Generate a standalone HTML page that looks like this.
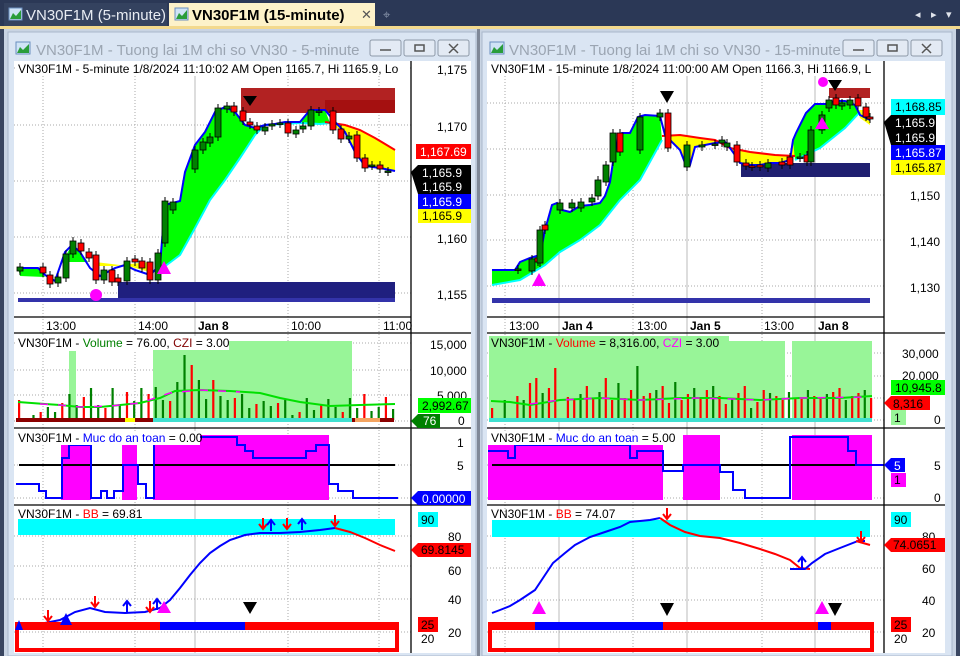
<!DOCTYPE html>
<html><head><meta charset="utf-8"><style>
body{margin:0;width:960px;height:656px;overflow:hidden;background:#2b3856;font-family:"Liberation Sans",sans-serif}
svg{display:block}
text{font-family:"Liberation Sans",sans-serif}
</style></head><body>
<svg id="s" width="960" height="656" viewBox="0 0 960 656" xmlns="http://www.w3.org/2000/svg">
<rect width="960" height="656" fill="#2b3856"/>
<rect x="4" y="3" width="163" height="23" fill="#34425f"/>
<rect x="9" y="8" width="13" height="12" fill="#cfe3f6" stroke="#6a8fbf"/><path d="M10 19 L13 13 L16 16 L21 10 L21 19Z" fill="#2a9d3a"/>
<text x="26" y="20" font-size="15" fill="#e8ecf3">VN30F1M (5-minute)</text>
<rect x="169" y="3" width="206" height="24" fill="#fdf2c9"/>
<rect x="175" y="8" width="13" height="12" fill="#cfe3f6" stroke="#6a8fbf"/><path d="M176 19 L179 13 L182 16 L187 10 L187 19Z" fill="#2a9d3a"/>
<text x="192" y="20" font-size="15" font-weight="bold" fill="#000">VN30F1M (15-minute)</text>
<text x="361" y="19" font-size="13" fill="#555">✕</text>
<text x="383" y="19" font-size="13" fill="#8894aa">⌖</text>
<text x="915" y="18" font-size="11" fill="#e0e4ec">◂</text><text x="931" y="18" font-size="11" fill="#e0e4ec">▸</text><text x="946" y="18" font-size="11" fill="#e0e4ec">▾</text>
<rect x="0" y="26" width="960" height="3" fill="#f3d98d"/>
<rect x="0" y="29" width="960" height="627" fill="#c9d4e3"/>
<rect x="0" y="29" width="4" height="627" fill="#3a4660"/>
<rect x="956" y="29" width="4" height="627" fill="#3a4660"/>
<rect x="8" y="32" width="468" height="624" fill="#dae5f3" stroke="#a9b7cb"/>
<rect x="482" y="32" width="470" height="624" fill="#dae5f3" stroke="#a9b7cb"/>
<rect x="477" y="29" width="3" height="627" fill="#7f8898"/>
<rect x="16" y="42" width="14" height="12" fill="#cfe3f6" stroke="#6a8fbf"/><path d="M17 53 L20 47 L23 50 L29 44 L29 53Z" fill="#2a9d3a"/>
<text x="36" y="55" font-size="15" fill="#9ba5b2">VN30F1M - Tuong lai 1M chi so VN30 - 5-minute</text>
<rect x="490" y="42" width="14" height="12" fill="#cfe3f6" stroke="#6a8fbf"/><path d="M491 53 L494 47 L497 50 L503 44 L503 53Z" fill="#2a9d3a"/>
<text x="509" y="55" font-size="15" fill="#9ba5b2">VN30F1M - Tuong lai 1M chi so VN30 - 15-minute</text>
<g fill="#e3eaf4" stroke="#8e99a8"><rect x="370" y="40" width="31" height="16" rx="2"/><rect x="404" y="40" width="31" height="16" rx="2"/><rect x="438" y="40" width="31" height="16" rx="2"/>
<rect x="843" y="40" width="31" height="16" rx="2"/><rect x="877" y="40" width="31" height="16" rx="2"/><rect x="911" y="40" width="31" height="16" rx="2"/></g>
<g stroke="#555" fill="none" stroke-width="1.5"><path d="M380 50h11M415 45h9v6h-9zM449 44l9 9M458 44l-9 9M853 50h11M888 45h9v6h-9zM922 44l9 9M931 44l-9 9"/></g>
<rect x="14" y="61" width="457" height="592" fill="#fff"/>
<rect x="487" y="61" width="458" height="592" fill="#fff"/>
<g id="dyn"></g>
<g stroke="#000" stroke-width="1.3">
<path d="M411 61V653M14 317H411M14 333H471M14 428H471M14 505H471"/>
<path d="M884 61V653M487 317H884M487 333H945M487 428H945M487 505H945"/>
</g>
<g font-size="12" fill="#000">
<rect x="16" y="61" width="392" height="15" fill="#fff"/>
<text x="18" y="73">VN30F1M - 5-minute 1/8/2024 11:10:02 AM Open 1165.7, Hi 1165.9, Lo</text>
<text x="437" y="74">1,175</text><text x="437" y="131">1,170</text><text x="437" y="243">1,160</text><text x="437" y="299">1,155</text>
<text x="46" y="330">13:00</text><text x="138" y="330">14:00</text><text x="198" y="330" font-weight="bold">Jan 8</text><text x="291" y="330">10:00</text><text x="383" y="330">11:00</text>
<text x="430" y="349">15,000</text><text x="430" y="375">10,000</text><text x="437" y="400">5,000</text><text x="458" y="425">0</text>
<text x="457" y="447">1</text><text x="457" y="470">5</text>
<text x="448" y="575">60</text><text x="448" y="604">40</text><text x="448" y="637">20</text><text x="448" y="541">80</text>
</g>
<g font-size="12">
<rect x="416" y="144" width="55" height="15" fill="#ff0000"/><text x="420" y="156" fill="#fff">1,167.69</text>
<path d="M411 172 L418 165 H471 V194 H418Z" fill="#000"/><text x="422" y="177" fill="#fff">1,165.9</text><text x="422" y="191" fill="#fff">1,165.9</text>
<rect x="418" y="194" width="53" height="15" fill="#0000ff"/><text x="422" y="206" fill="#fff">1,165.9</text>
<rect x="418" y="209" width="53" height="14" fill="#ffff00"/><text x="422" y="220" fill="#000">1,165.9</text>
<rect x="418" y="398" width="53" height="15" fill="#00ff00"/><text x="422" y="410" fill="#000">2,992.67</text>
<path d="M411 421 L418 414 H440 V428 H418Z" fill="#008000"/><text x="423" y="425" fill="#fff">76</text>
<path d="M411 498 L418 491 H471 V505 H418Z" fill="#0000ff"/><text x="422" y="503" fill="#fff">0.00000</text>
<rect x="418" y="512" width="20" height="15" fill="#00ffff"/><text x="421" y="524">90</text>
<path d="M411 550 L418 543 H471 V557 H418Z" fill="#ff0000"/><text x="421" y="554" fill="#000">69.8145</text>
<rect x="418" y="617" width="20" height="15" fill="#ff0000"/><text x="421" y="629">25</text>
<text x="421" y="643">20</text>
</g>
<g font-size="12">
<rect x="16" y="336" width="213" height="14" fill="#fff"/>
<text x="18" y="347"><tspan>VN30F1M - </tspan><tspan fill="#008000">Volume</tspan><tspan> = 76.00, </tspan><tspan fill="#800000">CZI</tspan><tspan> = 3.00</tspan></text>
<rect x="16" y="431" width="184" height="14" fill="#fff"/>
<text x="18" y="442"><tspan>VN30F1M - </tspan><tspan fill="#0000ff">Muc do an toan</tspan><tspan> = 0.00</tspan></text>
<text x="18" y="518"><tspan>VN30F1M - </tspan><tspan fill="#ff0000">BB</tspan><tspan> = 69.81</tspan></text>
</g>
<g font-size="12" fill="#000">
<rect x="489" y="61" width="392" height="15" fill="#fff"/>
<text x="491" y="73">VN30F1M - 15-minute 1/8/2024 11:00:00 AM Open 1166.3, Hi 1166.9, L</text>
<text x="910" y="200">1,150</text><text x="910" y="246">1,140</text><text x="910" y="292">1,130</text>
<text x="509" y="330">13:00</text><text x="562" y="330" font-weight="bold">Jan 4</text><text x="637" y="330">13:00</text><text x="690" y="330" font-weight="bold">Jan 5</text><text x="764" y="330">13:00</text><text x="818" y="330" font-weight="bold">Jan 8</text>
<text x="902" y="358">30,000</text><text x="902" y="380">20,000</text><text x="934" y="424">0</text>
<text x="934" y="470">5</text><text x="934" y="502">0</text>
<text x="922" y="541">80</text><text x="922" y="573">60</text><text x="922" y="605">40</text><text x="922" y="637">20</text>
</g>
<g font-size="12">
<rect x="891" y="99" width="54" height="16" fill="#00ffff"/><text x="895" y="111">1,168.85</text>
<path d="M884 122 L891 115 H936 V145 H891Z" fill="#000"/><text x="895" y="127" fill="#fff">1,165.9</text><text x="895" y="142" fill="#fff">1,165.9</text>
<rect x="891" y="145" width="54" height="15" fill="#0000ff"/><text x="895" y="157" fill="#fff">1,165.87</text>
<rect x="891" y="160" width="54" height="15" fill="#ffff00"/><text x="895" y="172">1,165.87</text>
<rect x="891" y="380" width="54" height="15" fill="#00ff00"/><text x="895" y="392">10,945.8</text>
<path d="M884 403 L891 396 H930 V410 H891Z" fill="#ff0000"/><text x="893" y="408">8,316</text>
<rect x="891" y="410" width="15" height="15" fill="#98f598"/><text x="894" y="422">1</text>
<path d="M884 465 L891 458 H905 V472 H891Z" fill="#0000ff"/><text x="894" y="470" fill="#fff">5</text>
<rect x="891" y="473" width="15" height="14" fill="#ff00ff"/><text x="894" y="484">1</text>
<rect x="891" y="512" width="20" height="15" fill="#00ffff"/><text x="894" y="524">90</text>
<path d="M884 545 L891 538 H945 V552 H891Z" fill="#ff0000"/><text x="893" y="549">74.0651</text>
<rect x="891" y="617" width="20" height="15" fill="#ff0000"/><text x="894" y="629">25</text>
<text x="894" y="643">20</text>
<rect x="489" y="336" width="240" height="14" fill="#98f598"/>
<text x="491" y="347"><tspan>VN30F1M - </tspan><tspan fill="#ff0000">Volume</tspan><tspan> = 8,316.00, </tspan><tspan fill="#ff00ff">CZI</tspan><tspan> = 3.00</tspan></text>
<rect x="489" y="431" width="186" height="14" fill="#fff"/>
<text x="491" y="442"><tspan>VN30F1M - </tspan><tspan fill="#0000ff">Muc do an toan</tspan><tspan> = 5.00</tspan></text>
<text x="491" y="518"><tspan>VN30F1M - </tspan><tspan fill="#ff0000">BB</tspan><tspan> = 74.07</tspan></text>
</g>
</svg>
<script>
const NS="http://www.w3.org/2000/svg",G=document.getElementById("dyn");
function el(t,a){const e=document.createElementNS(NS,t);for(const k in a)e.setAttribute(k,a[k]);G.appendChild(e);return e}
function pts(a){return a.map(p=>p.join(",")).join(" ")}
function hg(x1,x2,ys){ys.forEach(y=>el("line",{x1,x2,y1:y,y2:y,stroke:"#aaa","stroke-dasharray":"1,2"}))}
function vg(xs,y1,y2,solid){xs.forEach((x,i)=>el("line",{x1:x,x2:x,y1,y2,stroke:solid.includes(i)?"#bbb":"#aaa","stroke-dasharray":solid.includes(i)?"":"1,2"}))}
vg([43,135,195,288,379],61,653,[2]);hg(14,411,[68,125,181,237,293,343,370,395,421,465,498,536,566,599,632]);
vg([505,559,633,687,762,815],61,653,[1,3,5]);hg(487,884,[103,149,195,240,286,353,376,398,420,465,498,536,568,600,632]);
el("rect",{x:241,y:88,width:154,height:25,fill:"#b22222"});el("rect",{x:325,y:100,width:70,height:13,fill:"#a51010"});
el("rect",{x:118,y:282,width:277,height:18,fill:"#1f1f7f"});el("rect",{x:18,y:298,width:377,height:4,fill:"#3333aa"});
const LB=[[18,268],[38,268],[45,275],[55,281],[65,252],[72,245],[80,252],[90,268],[100,276],[115,268],[125,265],[135,270],[150,275],[160,265],[165,205],[180,201],[185,172],[195,145],[205,132],[215,112],[225,107],[235,112],[245,125],[255,128],[265,125],[275,124],[285,122],[300,122],[310,110],[325,110],[335,122],[345,132],[355,152],[365,166],[380,168],[395,171]];
const LC=[[160,270],[180,255],[195,228],[210,200],[225,180],[240,158],[255,135],[265,125],[300,123],[320,124],[330,123]];
el("polygon",{points:pts(LB.filter(p=>p[0]>=160&&p[0]<=330).concat(LC.slice().reverse())),fill:"#00ff00"});
const LR=[[325,122],[345,125],[360,130],[375,138],[395,150]];
el("polygon",{points:pts([[325,122],[345,132],[355,152],[365,166],[380,168],[395,171]].concat(LR.slice().reverse())),fill:"#ffff00"});
el("polygon",{points:"18,268 38,268 45,277 20,276",fill:"#00ff00"});el("polygon",{points:"62,262 72,245 80,252 88,262",fill:"#00ff00"});
el("polygon",{points:"95,266 115,266 125,265 135,268 150,272 150,262 120,265 95,262",fill:"#ffff00"});
el("polyline",{points:pts(LC),fill:"none",stroke:"#00ffff","stroke-width":2});
el("polyline",{points:pts(LR),fill:"none",stroke:"#ff0000","stroke-width":2});
el("polyline",{points:pts(LB),fill:"none",stroke:"#0000ff","stroke-width":2});
function cd(x,a,b,c){const h=Math.min(a,b),l=Math.max(a,b);el("line",{x1:x,x2:x,y1:h-4,y2:l+4,stroke:"#000"});el("rect",{x:x-3,y:h,width:6,height:Math.max(l-h,1.5),fill:c,stroke:"#000","stroke-width":.8})}
[[20,267,271,"g"],[43,267,273,"r"],[50,275,284,"r"],[58,277,283,"g"],[66,254,278,"g"],[73,241,254,"g"],[81,243,251,"r"],[89,252,258,"r"],[96,255,280,"r"],[104,270,280,"g"],[112,270,282,"r"],[118,278,282,"r"],[127,261,281,"g"],[135,259,262,"r"],[142,261,268,"r"],[150,262,280,"r"],[158,253,280,"g"],[165,201,243,"g"],[173,202,210,"g"],[195,150,169,"g"],[203,142,150,"g"],[210,137,143,"g"],[218,108,137,"g"],[227,106,109,"g"],[234,106,112,"r"],[243,111,121,"r"],[250,122,125,"r"],[257,126,130,"r"],[265,127,131,"g"],[272,124,126,"g"],[280,123,124,"g"],[288,123,133,"r"],[296,130,134,"g"],[303,126,129,"g"],[311,110,126,"g"],[319,111,112,"g"],[333,111,130,"r"],[341,129,139,"r"],[349,136,139,"g"],[357,135,158,"r"],[365,158,168,"r"],[372,165,166,"g"],[380,165,169,"r"],[388,171,172,"g"]].forEach(c=>cd(c[0],c[1],c[2],c[3]=="g"?"#008000":"#ff0000"));
el("polygon",{points:"243,96 257,96 250,106",fill:"#000"});el("polygon",{points:"157,274 171,274 164,261",fill:"#ff00ff"});el("circle",{cx:96,cy:295,r:6,fill:"#ff00ff"});
el("rect",{x:829,y:88,width:41,height:10,fill:"#b22222"});el("rect",{x:741,y:163,width:129,height:14,fill:"#1f1f70"});
el("rect",{x:492,y:298,width:378,height:5,fill:"#3333aa"});
const RB=[[492,270],[515,270],[520,262],[530,258],[540,255],[545,230],[552,205],[557,203],[562,210],[570,212],[580,206],[590,205],[600,203],[605,196],[610,182],[613,162],[618,138],[622,133],[630,133],[638,117],[645,115],[660,116],[665,135],[670,140],[680,150],[685,163],[690,165],[695,147],[705,145],[715,143],[725,142],[730,148],[735,155],[740,163],[750,165],[760,165],[770,163],[780,163],[790,160],[793,140],[796,133],[806,113],[815,104],[825,104],[835,101],[845,101],[855,105],[860,115],[870,120]];
const RC=[[492,285],[520,280],[545,265],[560,252],[580,240],[600,225],[620,200],[640,180],[662,140]];
el("polygon",{points:pts(RB.filter(p=>p[0]<=662).concat(RC.slice().reverse())),fill:"#00ff00"});
const RR=[[662,136],[680,135],[700,138],[715,140],[730,148],[750,152],[775,155],[795,156]];
el("polygon",{points:pts(RB.filter(p=>p[0]>=665&&p[0]<=795).concat(RR.slice().reverse())),fill:"#ffff00"});
const RC2=[[795,160],[820,148],[845,128],[860,112]];
el("polygon",{points:pts(RB.filter(p=>p[0]>=793&&p[0]<=860).concat(RC2.slice().reverse())),fill:"#00ff00"});
el("polygon",{points:"858,110 870,110 870,125 860,118",fill:"#ffff00"});
[RC,RC2].forEach(a=>el("polyline",{points:pts(a),fill:"none",stroke:"#00ffff","stroke-width":2}));
el("polyline",{points:pts(RR),fill:"none",stroke:"#ff0000","stroke-width":2});
el("polyline",{points:pts(RB),fill:"none",stroke:"#0000ff","stroke-width":2});
[[518,269,270,"g"],[532,259,271,"g"],[538,258,262,"r"],[540,230,263,"g"],[545,225,230,"r"],[560,203,210,"g"],[572,203,208,"g"],[581,202,208,"g"],[592,198,202,"g"],[598,180,196,"g"],[606,165,182,"g"],[613,133,162,"g"],[620,133,152,"r"],[640,117,150,"g"],[660,113,117,"g"],[668,113,148,"r"],[687,145,167,"g"],[702,145,147,"g"],[715,144,145,"g"],[722,140,143,"g"],[727,143,147,"g"],[737,145,162,"r"],[746,163,166,"r"],[752,166,167,"r"],[760,165,167,"r"],[768,163,168,"g"],[782,162,165,"r"],[790,157,165,"r"],[800,157,158,"g"],[807,155,162,"r"],[811,130,162,"g"],[822,115,130,"g"],[829,100,108,"g"],[836,98,105,"r"],[842,103,106,"g"],[850,100,105,"g"],[858,98,106,"r"],[866,107,117,"r"],[870,117,119,"r"]].forEach(c=>cd(c[0],c[1],c[2],c[3]=="g"?"#008000":"#ff0000"));
el("polygon",{points:"660,91 674,91 667,103",fill:"#000"});el("polygon",{points:"828,80 842,80 835,91",fill:"#000"});
el("polygon",{points:"532,286 546,286 539,273",fill:"#ff00ff"});el("polygon",{points:"815,129 829,129 822,117",fill:"#ff00ff"});el("circle",{cx:823,cy:82,r:5,fill:"#ff00ff"});
el("rect",{x:69,y:351,width:7,height:70,fill:"#98f598"});el("rect",{x:153,y:341,width:199,height:80,fill:"#98f598"});
function vol(x0,x1,y0,ys,cols){const n=ys.length,dx=(x1-x0)/(n-1);ys.forEach((h,i)=>el("rect",{x:x0+i*dx,y:y0-h,width:2.2,height:h,fill:cols[i]}))}
const lv=[20,0,5,8,13,8,17,26,15,23,32,15,12,32,16,28,19,32,26,33,20,19,38,65,55,40,21,40,24,20,22,26,12,16,19,14,17,20,5,8,22,10,15,21,13,8,22,12,26,9,13,23,11];
vol(18,392,420,lv,lv.map((v,i)=>(i*7%3==0)?"#ff0000":"#008000"));
el("rect",{x:16,y:418,width:378,height:4,fill:"#8b0000"});el("rect",{x:153,y:418,width:199,height:4,fill:"#40e0d0"});
el("rect",{x:355,y:418,width:25,height:4,fill:"#f4a460"});el("rect",{x:125,y:418,width:10,height:4,fill:"#ffff00"});
el("polyline",{points:"18,402 45,404 60,405 80,407 100,407 120,405 140,403 160,398 175,391 200,390 230,391 260,393 280,398 300,402 330,406 360,405 395,404",fill:"none",stroke:"#00e000","stroke-width":2});
el("polyline",{points:"40,404 60,405 80,407 110,406 140,403 170,393 200,390 240,392",fill:"none",stroke:"#ff00ff","stroke-width":1.5,"stroke-dasharray":"8,10"});
el("rect",{x:489,y:341,width:296,height:80,fill:"#98f598"});el("rect",{x:792,y:341,width:80,height:80,fill:"#98f598"});
const rv=[10,0,18,0,22,18,35,40,25,30,50,0,21,18,24,32,20,26,40,18,35,20,28,52,22,25,28,32,15,36,18,24,30,20,28,32,22,14,19,25,32,10,16,28,25,22,18,26,19,20,28,22,20,24,26,30,18,22,25,28,20];
vol(491,870,418,rv,rv.map((v,i)=>(i*5%3==1)?"#008000":"#ff0000"));
el("rect",{x:489,y:418,width:383,height:4,fill:"#40e0d0"});
el("polyline",{points:"491,401 510,402 530,405 560,400 600,398 640,400 680,398 720,398 760,400 800,398 840,398 872,396",fill:"none",stroke:"#00e000","stroke-width":2});
el("polyline",{points:"530,404 560,400 600,398 640,400 700,398 760,400 800,398 870,397",fill:"none",stroke:"#ff00ff","stroke-width":1.5,"stroke-dasharray":"8,10"});
[[61,445,30,55],[122,445,15,55],[153,435,176,65]].forEach(r=>el("rect",{x:r[0],y:r[1],width:r[2],height:r[3],fill:"#ff00ff"}));
el("line",{x1:19,x2:395,y1:465,y2:465,stroke:"#000","stroke-width":2});
el("polyline",{points:"16,484 39,484 39,491 46,491 46,498 62,498 62,458 69,458 69,445 91,445 91,498 101,498 101,491 107,491 107,498 114,498 114,491 123,491 123,465 138,465 138,484 146,484 146,498 154,498 154,437 237,437 237,445 245,445 245,451 253,451 253,458 306,458 306,451 316,451 316,445 329,445 329,484 338,484 338,491 353,491 353,498 398,498",fill:"none",stroke:"#0000ff","stroke-width":2});
[[488,445,175,55],[683,435,37,65],[792,435,80,65]].forEach(r=>el("rect",{x:r[0],y:r[1],width:r[2],height:r[3],fill:"#ff00ff"}));
el("line",{x1:492,x2:870,y1:465,y2:465,stroke:"#000","stroke-width":2});
el("polyline",{points:"488,451 508,451 508,458 515,458 515,445 529,445 529,445 630,445 630,458 637,458 637,451 663,451 663,471 683,471 683,465 720,465 720,472 733,472 733,490 745,490 745,498 790,498 790,437 848,437 848,451 856,451 856,465 884,465",fill:"none",stroke:"#0000ff","stroke-width":2});
el("rect",{x:18,y:519,width:377,height:16,fill:"#00ffff"});
el("polyline",{points:"18,627 30,626 45,623 60,620 75,612 90,608 105,612 125,613 145,612 160,608 170,600 180,588 190,575 200,563 210,553 220,546 230,540 245,535 260,533 280,533 300,532 320,530 335,528",fill:"none",stroke:"#0000ff","stroke-width":2});
el("polyline",{points:"335,528 350,532 365,538 380,545 395,551",fill:"none",stroke:"#ff0000","stroke-width":2});
el("rect",{x:17,y:624,width:380,height:26,fill:"none",stroke:"#ff0000","stroke-width":4});
el("rect",{x:15,y:622,width:384,height:8,fill:"#ff0000"});el("rect",{x:160,y:622,width:85,height:8,fill:"#0000ff"});
el("polygon",{points:"157,613 171,613 164,601",fill:"#ff00ff"});el("polygon",{points:"243,602 257,602 250,614",fill:"#000"});
el("polygon",{points:"60,625 72,625 66,613",fill:"#0000ff"});el("polygon",{points:"15,630 23,630 19,620",fill:"#0000ff"});
[[48,622],[95,608],[150,613],[263,530],[287,530],[335,527]].forEach(a=>el("path",{d:`M${a[0]} ${a[1]-12}v10M${a[0]-4} ${a[1]-6}l4 5 4-5`,stroke:"#ff0000","stroke-width":2,fill:"none"}));
[[127,612],[157,610],[271,531],[302,530]].forEach(a=>el("path",{d:`M${a[0]} ${a[1]}v-10M${a[0]-4} ${a[1]-6}l4-5 4 5`,stroke:"#0000ff","stroke-width":2,fill:"none"}));
el("rect",{x:492,y:520,width:378,height:17,fill:"#00ffff"});
el("polyline",{points:"492,613 500,610 510,606 520,600 535,590 545,575 553,563 565,553 575,545 590,537 605,532 620,527 630,522 640,521 650,520 660,518",fill:"none",stroke:"#0000ff","stroke-width":2});
el("polyline",{points:"660,518 670,525 685,532 700,536 720,538 740,543 760,549 775,554 790,560 800,568 810,569",fill:"none",stroke:"#ff0000","stroke-width":2});
el("polyline",{points:"790,569 805,569 812,563 825,554 840,548 858,541 865,541",fill:"none",stroke:"#0000ff","stroke-width":2});
el("polyline",{points:"856,541 870,545",fill:"none",stroke:"#ff0000","stroke-width":2});
el("rect",{x:490,y:624,width:382,height:26,fill:"none",stroke:"#ff0000","stroke-width":4});
el("rect",{x:488,y:622,width:386,height:8,fill:"#ff0000"});el("rect",{x:535,y:622,width:128,height:8,fill:"#0000ff"});el("rect",{x:818,y:622,width:13,height:8,fill:"#0000ff"});
el("polygon",{points:"532,614 546,614 539,601",fill:"#ff00ff"});el("polygon",{points:"815,614 829,614 822,601",fill:"#ff00ff"});
el("polygon",{points:"660,603 674,603 667,616",fill:"#000"});el("polygon",{points:"828,603 842,603 835,616",fill:"#000"});
[[667,520],[861,543]].forEach(a=>el("path",{d:`M${a[0]} ${a[1]-12}v10M${a[0]-4} ${a[1]-6}l4 5 4-5`,stroke:"#ff0000","stroke-width":2,fill:"none"}));
el("path",{d:"M802 568v-10M798 562l4-5 4 5",stroke:"#0000ff","stroke-width":2,fill:"none"});
</script>
</body></html>
